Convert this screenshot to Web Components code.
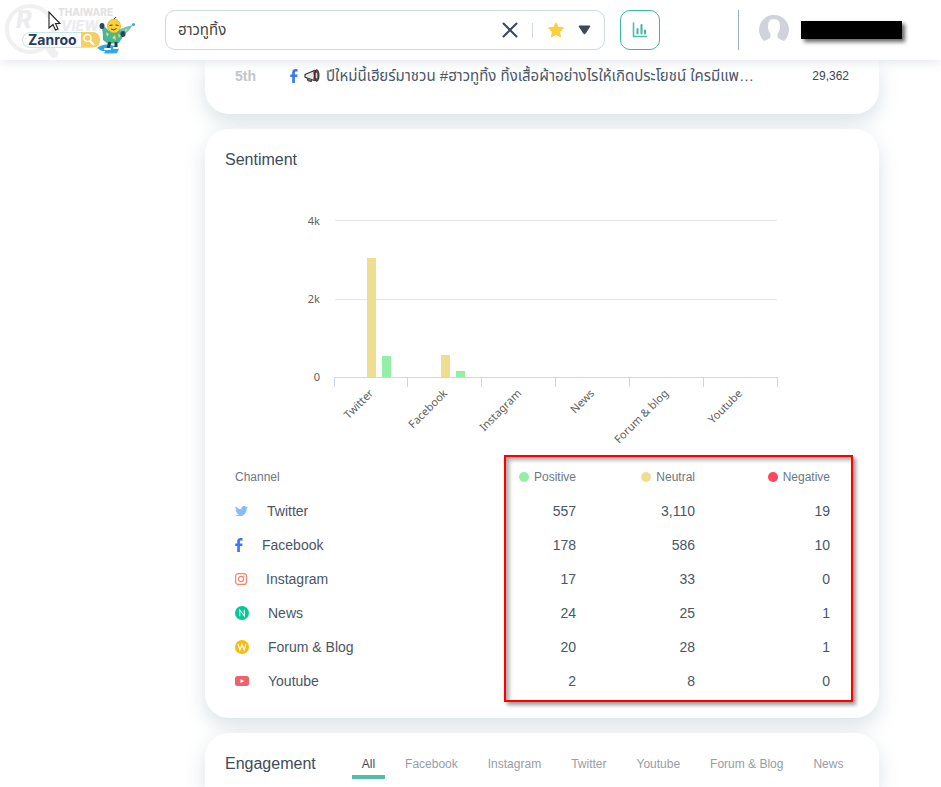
<!DOCTYPE html>
<html lang="th">
<head>
<meta charset="utf-8">
<meta name="viewport" content="width=device-width, initial-scale=1">
<title>Zanroo Search</title>
<style>
html{--ink:#3d4b5c;--muted:#6b7785;--teal:#3cb8a0;--positive:#94eea5;--neutral:#f0de90;--negative:#ff4757}
body{margin:0;background:#fff;color:var(--ink);font:14px/20px "Liberation Sans",Arial,"Noto Sans Thai","Noto Sans",sans-serif}
</style>
</head>
<body>
<zr-app>
  <zr-header slot="header"></zr-header>
  <zr-card class="first">
    <zr-post rank="5th" count="29,362">ปีใหม่นี้เฮียร์มาชวน #ฮาวทูทิ้ง ทิ้งเสื้อผ้าอย่างไรให้เกิดประโยชน์ ใครมีแพ…</zr-post>
  </zr-card>
  <zr-card heading="Sentiment">
    <zr-chart></zr-chart>
    <zr-table></zr-table>
  </zr-card>
  <zr-card class="last">
    <zr-tabs heading="Engagement"></zr-tabs>
  </zr-card>
</zr-app>
<script>
const make=(name,render,after)=>customElements.define(name,class extends HTMLElement{
  connectedCallback(){
    if(this.shadowRoot)return;
    const t=document.createElement('template');
    t.innerHTML=render(this);
    this.attachShadow({mode:'open'}).append(t.content.cloneNode(true));
    if(after)after(this,this.shadowRoot);
  }
});

make('zr-app',()=>`
<style>
:host{display:flex;flex-direction:column;min-height:100vh}
::slotted(zr-header){position:sticky;top:0;z-index:2}
main{flex:1;display:flex;flex-direction:column;gap:15px;padding:0 62px 0 205px;overflow:hidden}
::slotted(.first){--radius:0 0 24px 24px;--pad:6px 20px 28px}
::slotted(.last){flex:1;--radius:24px 24px 0 0;--pad:21px 20px 0}
</style>
<slot name="header"></slot><main><slot></slot></main>`);

make('zr-card',el=>`
<style>
:host{display:block;box-sizing:border-box;background:#fff;border-radius:var(--radius,24px);padding:var(--pad,21px 20px 20px);box-shadow:0 8px 20px rgba(70,110,130,.2)}
h2{margin:0;font-size:16px;line-height:20px;font-weight:400}
</style>
${el.getAttribute('heading')?`<h2>${el.getAttribute('heading')}</h2>`:''}<slot></slot>`);

const icons={
  twitter:[13,'0 0 24 20','<path fill="#84befa" d="M24 2.4a10 10 0 0 1-2.8.8A5 5 0 0 0 23.300.4a10 10 0 0 1-3.100 1.200A4.900 4.900 0 0 0 11.800 6.100 14 14 0 0 1 1.700.900a4.900 4.900 0 0 0 1.500 6.600 5 5 0 0 1-2.200-.6 4.900 4.900 0 0 0 3.900 4.900 5 5 0 0 1-2.200.1 4.900 4.900 0 0 0 4.600 3.400A10 10 0 0 1 0 17.300 14 14 0 0 0 21.500 4.900 10 10 0 0 0 24 2.400z"/>'],
  facebook:[8,'0 0 8 14','<path fill="#3b76f6" d="M2.200 14V8H.2V5.400h2V3.500C2.200 1.300 3.500 0 5.500 0c1 0 1.900.1 2.100.2v2.300H6.200c-1.100 0-1.300.5-1.300 1.300v1.600h2.700L7.200 8H4.900v6z"/>'],
  instagram:[12,'0 0 12 12','<g fill="none" stroke="#f58468" stroke-width="1.200"><rect x=".6" y=".6" width="10.800" height="10.800" rx="2.500"/><circle cx="6" cy="6" r="2.600"/></g><circle cx="9" cy="3" r=".7" fill="#f58468"/>'],
  news:[14,'0 0 14 14','<circle cx="7" cy="7" r="7" fill="#04c895"/><path fill="none" stroke="#fff" stroke-width="1.100" d="M4.700 10.200V4l4.600 6V3.800"/>'],
  forum:[14,'0 0 14 14','<circle cx="7" cy="7" r="7" fill="#fcbb09"/><path fill="none" stroke="#fff" stroke-width="1.100" d="M3 4l1.900 6L7 4.300 9.100 10 11 4"/>'],
  youtube:[14,'0 0 14 10','<rect width="14" height="10" rx="2.500" fill="#f0616d"/><path fill="#fff" d="M5.500 2.900v4.200L9.200 5z"/>'],
  close:[16,'0 0 16 16','<path d="M1.500 1.500l13 13M14.500 1.500l-13 13" stroke="#3b4859" stroke-width="2" stroke-linecap="round"/>'],
  star:[16,'0 0 16 16','<path fill="#fbd03f" stroke="#fbd03f" stroke-width="1.500" stroke-linejoin="round" d="M8 1.200l2 4.300 4.900.6-3.600 3.400.9 4.900L8 12l-4.200 2.400.9-4.900L1.100 6.100l4.900-.6z"/>'],
  caret:[13,'0 0 13 10','<path fill="#3b4859" stroke="#3b4859" stroke-linejoin="round" d="M1 1h11L7.400 8.300c-.5.700-1.300.7-1.800 0z"/>'],
  chart:[16,'0 0 16 16','<path fill="none" stroke="#4cc0ab" stroke-width="1.600" stroke-linecap="round" d="M1.500 1v13.500h13"/><path fill="none" stroke="#3cb8a0" stroke-width="2" stroke-linecap="round" d="M5.500 7v4.500M9.500 3v8.500M13 8.500v3"/>'],
  horn:[16,'0 0 16 14','<path fill="#e9e9ea" stroke="#333" stroke-width="1.200" stroke-linejoin="round" d="M1 5.500L11 1.200q2 5 0 10.500L1 8.200z"/><path fill="#777" stroke="#333" d="M3 9.200l.8 2.500 3.700.9.2-1.600"/><path fill="#e52f42" d="M9 2.200l2.200-.9q1.700 5 0 10.300L9 10.800q1.300-4.300 0-8.600z"/><ellipse cx="12.800" cy="6.500" rx="2.200" ry="5.800" fill="#555" stroke="#252525"/><ellipse cx="12.500" cy="6.500" rx=".8" ry="3" fill="#d5d5d5"/>']
};
make('zr-icon',el=>{const [w,vb,body]=icons[el.getAttribute('name')];return `
<style>:host{display:inline-flex;flex:none}svg{display:block;width:${w}px;height:auto}</style>
<svg viewBox="${vb}" aria-hidden="true">${body}</svg>`});

make('zr-logo',()=>`
<style>
:host{display:block;width:165px;height:60px;position:relative}
a,svg{display:block}
.pointer{position:absolute;left:48px;top:11px}
text{font-family:Inter,"Liberation Sans",sans-serif}
</style>
<a href="#" aria-label="Zanroo"><svg width="165" height="60" viewBox="0 0 165 60">
<g fill="none" stroke="#f0f0f1"><circle cx="30" cy="29" r="23" stroke-width="4"/><path d="M46 44l8 10" stroke-width="8" stroke-linecap="round"/></g>
<text x="16" y="28" font-size="24" font-weight="800" font-style="italic" fill="#ececee">R</text>
<text x="58" y="16" font-size="10" font-weight="800" fill="#e2e2e4">THAIWARE</text>
<text x="52" y="31" font-size="14" font-weight="800" font-style="italic" fill="#ececee">EVIEW</text>
<rect x="22.500" y="32.500" width="77" height="15" rx="7.500" fill="#fff" fill-opacity=".7" stroke="#c5e9e3"/>
<path d="M81 32h11q8 0 8 8t-8 7H81z" fill="#f5cf62"/>
<circle cx="87.500" cy="38" r="3.500" fill="none" stroke="#fff" stroke-width="1.500"/><path d="M90 41l4 4" stroke="#fff" stroke-width="2"/>
<text x="28" y="45" font-size="14" font-weight="700" fill="#263a66">Zanroo</text>
<path d="M97 48q6-5 14-3 7 1 8 4l-2 4q-9 1-14 0 3-1 2-2-5 0-6-2z" fill="#31a9e1"/>
<path d="M118 30q6-3 15-5-4 6-9 10l-5 2z" fill="#6fc6ae"/>
<path d="M103 35l-1-7 3-1 4 4 11-1 4 5-5 8-11 1-5-4z" fill="#42b998"/>
<path d="M106 32l3 2-2 3zM112 38l3-3 1 5zM118 34l3 1-2 3zM125 29l3 0-3 3z" fill="#f5d44e"/>
<path d="M110 42l-2 6M116 42l0 6" stroke="#263b55" stroke-width="3"/>
<path d="M105 49h5M114 48h4" stroke="#fff" stroke-width="2" stroke-linecap="round"/>
<ellipse cx="102" cy="26" rx="2.500" ry="3" fill="#2f4560"/><ellipse cx="123" cy="34" rx="2.500" ry="3" fill="#2f4560"/>
<ellipse cx="114" cy="26" rx="6.500" ry="7" fill="#fbd234" stroke="#cf9d24" stroke-width=".6"/>
<path d="M109.500 25.500l3-.5M115.500 25l3 .5M111 29q3 2 5.500-.5M114 19l2-2" stroke="#473a26" fill="none"/>
<circle cx="133.500" cy="24.500" r="1.500" fill="#37a9dd"/>
</svg></a>
<svg class="pointer" width="13" height="21" viewBox="0 0 13 21" aria-hidden="true"><path d="M1 1v16l4-3.500 2.500 5.500 2.500-1-2.500-5.500H12z" fill="#fff" stroke="#222" stroke-width="1.100"/></svg>`);

make('zr-search',()=>`
<style>
:host{display:block;flex:0 1 440px;min-width:0}
form{box-sizing:border-box;height:40px;display:flex;align-items:center;border:1px solid #ced9e3;border-radius:10px;padding:0 8px 0 12px;background:#fff}
input{flex:1;min-width:0;border:0;outline:0;padding:0;background:none;color:#454545;font:inherit;font-size:15px;height:32px}
button{border:0;background:none;padding:0;height:32px;display:grid;place-items:center;cursor:pointer}
.clear,.star{width:45px}
.more{width:18px;justify-content:start}
i{width:1px;height:15px;background:#ced9e3}
</style>
<form role="search"><input aria-label="Search keyword" value="ฮาวทูทิ้ง">
<button class="clear" type="button" aria-label="Clear"><zr-icon name="close"></zr-icon></button><i></i>
<button class="star" type="button" aria-label="Favourite"><zr-icon name="star"></zr-icon></button>
<button class="more" type="button" aria-label="More"><zr-icon name="caret"></zr-icon></button></form>`);

make('zr-user',()=>`
<style>
:host{display:flex;align-items:center;gap:12px;height:40px;border-left:1px solid #9cb0bf;padding-left:20px}
svg{display:block}
.name{width:101px;height:18px;background:#000;box-shadow:3px 3px 4px rgba(0,0,0,.6)}
</style>
<svg width="30" height="30" viewBox="0 0 30 30" role="img" aria-label="User"><path fill="#d0d4da" d="M5 26A15 15 0 1 1 25 26Q19 24 18.500 22v-3q2-2 2.500-6.500Q21.500 4 15 4T9 12.500q.5 4.500 2.500 6.500v3Q11 24 5 26z"/></svg>
<div class="name"></div>`);

make('zr-header',()=>`
<style>
:host{display:flex;align-items:center;height:60px;background:#fff;box-shadow:0 2px 10px rgba(60,80,110,.14);box-sizing:border-box;padding-right:39px}
.stats{flex:none;width:40px;height:40px;margin-left:15px;padding:0;background:#fff;border:1px solid var(--teal);border-radius:10px;display:grid;place-items:center}
zr-user{margin-left:auto}
</style>
<zr-logo></zr-logo><zr-search></zr-search><button class="stats" aria-label="Statistics"><zr-icon name="chart"></zr-icon></button><zr-user></zr-user>`);

make('zr-post',el=>`
<style>
:host{display:flex;align-items:center;padding:0 10px;line-height:20px}
b{width:55px;color:#c1c6ca;font-size:14px}
a{display:flex;align-items:center;gap:6px;min-width:0;color:inherit;text-decoration:none}
span{font-size:15px;color:#4a5768;white-space:nowrap}
.count{margin-left:auto;font-size:12px;color:#3d4552}
</style>
<b>${el.getAttribute('rank')}</b><a href="#"><zr-icon name="facebook"></zr-icon><zr-icon name="horn"></zr-icon><span><slot></slot></span></a><span class="count">${el.getAttribute('count')}</span>`);

const channels=[['twitter','Twitter','Twitter',557,3110,19],['facebook','Facebook','Facebook',178,586,10],['instagram','Instagram','Instagram',17,33,0],['news','News','News',24,25,1],['forum','Forum &amp; Blog','Forum &amp; blog',20,28,1],['youtube','Youtube','Youtube',2,8,0]];

make('zr-chart',()=>{
  const left=109,width=443,step=width/6,base=208,unit=154/4000;
  const ticks=[...Array(7).keys()].map(i=>{const x=Math.floor(left+i*step)+.5;return `<path d="M${x} 208v10"/>`}).join('');
  const bar=(x,v,c)=>{const h=Math.floor(v*unit);return h>2?`<rect x="${x}" y="${base-h}" width="9" height="${h}" fill="var(--${c})"/>`:''};
  return `
<style>
:host{display:block}
svg{display:block;width:100%;height:auto}
text{font:11px "Noto Sans","Open Sans",sans-serif;fill:#606060;text-anchor:end}
</style>
<svg viewBox="0 1 634 289" role="img" aria-label="Sentiment by channel">
<path stroke="#e6e6e6" d="M110 51.500h442M110 130.500h442"/>
<text x="95" y="56">4k</text><text x="95" y="134">2k</text><text x="95" y="212">0</text>
${channels.map((c,i)=>{const x=Math.round(left+i*step);return bar(x+33,c[4],'neutral')+bar(x+48,c[3],'positive')}).join('')}
<g stroke="#ccd6eb" fill="none"><path d="M109 208.500h444"/>${ticks}</g>
${channels.map((c,i)=>`<text transform="translate(${Math.round(left+(i+.5)*step+3)} 225) rotate(-45)">${c[2]}</text>`).join('')}
</svg>`});

make('zr-table',()=>`
<style>
:host{display:block;position:relative;margin-right:19px}
table{width:100%;table-layout:fixed;border-collapse:collapse}
th,td{height:34px;padding:0 10px;text-align:right;font-weight:400;line-height:20px;color:#4a5666}
thead th{font-size:12px;color:var(--muted);height:35px}
th:first-child{text-align:left}
.mid{width:99px}.end{width:115px}
tbody th div{display:flex;align-items:center;gap:19px}
.dot{display:inline-flex;align-items:center;gap:5px;vertical-align:top}
.dot::before{content:"";width:10px;height:10px;border-radius:50%;background:var(--c)}
.frame{position:absolute;top:-4px;right:-13px;bottom:-4px;width:349px;box-sizing:border-box;border:2px solid #f00;box-shadow:3px 3px 4px rgba(0,0,0,.4),inset 3px 3px 4px rgba(0,0,0,.35);pointer-events:none}
</style>
<table><thead><tr><th scope="col">Channel</th>
<th scope="col" class="mid"><span class="dot" style="--c:var(--positive)">Positive</span></th>
<th scope="col" class="mid"><span class="dot" style="--c:var(--neutral)">Neutral</span></th>
<th scope="col" class="end"><span class="dot" style="--c:var(--negative)">Negative</span></th></tr></thead>
<tbody>${channels.map(c=>`<tr><th scope="row"><div><zr-icon name="${c[0]}"></zr-icon><span>${c[1]}</span></div></th>${c.slice(3).map(n=>`<td>${n.toLocaleString('en-US')}</td>`).join('')}</tr>`).join('')}</tbody></table>
<div class="frame"></div>`);

make('zr-tabs',el=>`
<style>
:host{display:flex;gap:36px;align-items:flex-start}
h2{margin:0;font-size:16px;line-height:20px;font-weight:400}
div{display:flex;gap:10px}
button{flex:none;border:0;border-bottom:4px solid transparent;background:none;padding:0 10px 1px;font:12px/20px "Liberation Sans",Arial,sans-serif;color:#969da6;cursor:pointer}
button[aria-selected=true]{color:var(--ink);border-color:#51beaa}
</style>
<h2>${el.getAttribute('heading')}</h2><div role="tablist">${['All','Facebook','Instagram','Twitter','Youtube','Forum &amp; Blog','News'].map((n,i)=>`<button role="tab" aria-selected="${!i}">${n}</button>`).join('')}</div>`,
(el,root)=>root.querySelectorAll('button').forEach(b=>b.onclick=()=>root.querySelectorAll('button').forEach(o=>o.setAttribute('aria-selected',o===b))));
</script>
</body>
</html>
